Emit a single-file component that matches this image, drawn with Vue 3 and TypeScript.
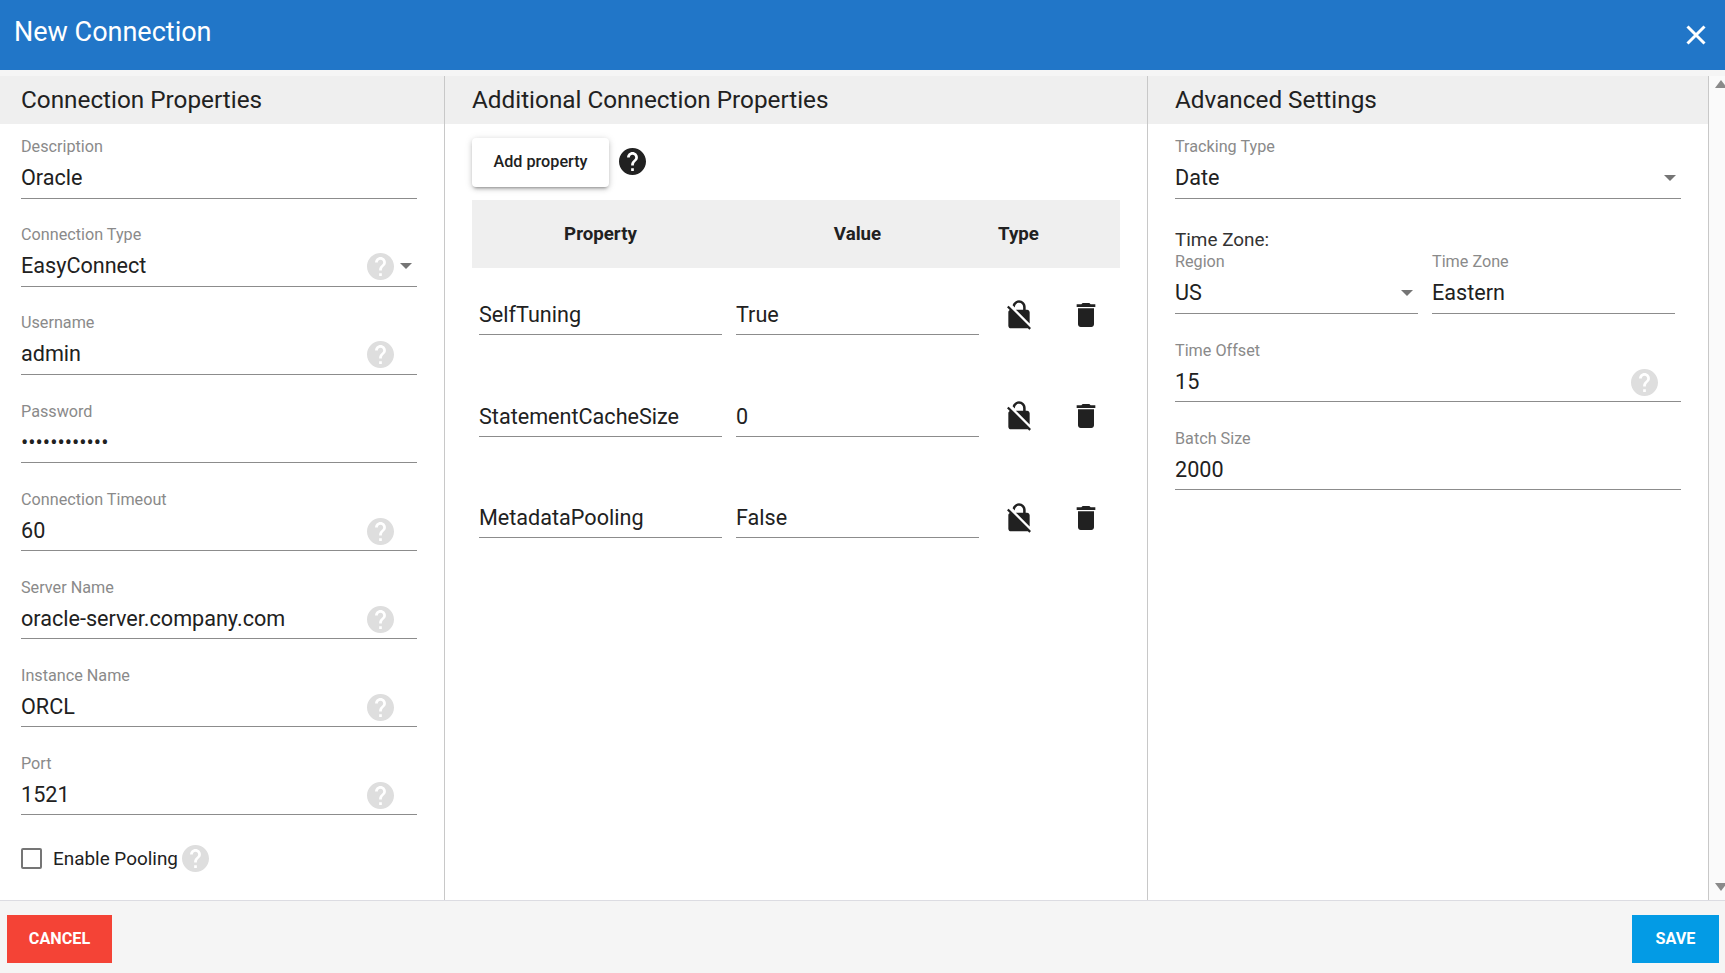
<script setup lang="ts">
interface Field { label: string; value: string; help?: boolean; select?: boolean; low?: boolean }
const leftFields: Field[] = [
  { label: 'Description', value: 'Oracle' },
  { label: 'Connection Type', value: 'EasyConnect', help: true, select: true },
  { label: 'Username', value: 'admin', help: true },
  { label: 'Password', value: '••••••••••••', low: true },
  { label: 'Connection Timeout', value: '60', help: true, low: true },
  { label: 'Server Name', value: 'oracle-server.company.com', help: true, low: true },
  { label: 'Instance Name', value: 'ORCL', help: true, low: true },
  { label: 'Port', value: '1521', help: true, low: true },
]
const rows = [
  { name: 'SelfTuning', value: 'True' },
  { name: 'StatementCacheSize', value: '0' },
  { name: 'MetadataPooling', value: 'False' },
]
const helpPath = 'M12 2C6.48 2 2 6.48 2 12s4.48 10 10 10 10-4.48 10-10S17.52 2 12 2zm1 17h-2v-2h2v2zm2.07-7.75l-.9.92C13.45 12.9 13 13.5 13 15h-2v-.5c0-1.1.45-2.1 1.17-2.83l1.24-1.26c.37-.36.59-.86.59-1.41 0-1.1-.9-2-2-2s-2 .9-2 2H8c0-2.21 1.79-4 4-4s4 1.79 4 4c0 .88-.36 1.68-.93 2.25z'
</script>

<template>
  <div class="dialog">
    <header class="topbar">
      <h1 class="title">New Connection</h1>
      <svg class="close" viewBox="0 0 20 20"><path d="M1.5 1.5L18.5 18.5M18.5 1.5L1.5 18.5" /></svg>
    </header>

    <main class="body">
      <section class="col col-left">
        <h2 class="col-title">Connection Properties</h2>
        <div v-for="f in leftFields" :key="f.label" class="field" :class="{ low: f.low }">
          <div class="label">{{ f.label }}</div>
          <div class="input" :class="{ 'has-help': f.help && !f.select, 'has-select': f.select }">
            <span class="val">{{ f.value }}</span>
            <svg v-if="f.help" class="help" viewBox="2 2 20 20"><path :d="helpPath" /></svg>
            <span v-if="f.select" class="caret caret-near"></span>
          </div>
        </div>
        <div class="pooling">
          <span class="checkbox"></span>
          <span class="pool-text">Enable Pooling</span>
          <svg class="help" viewBox="2 2 20 20"><path :d="helpPath" /></svg>
        </div>
      </section>

      <section class="col col-mid">
        <h2 class="col-title">Additional Connection Properties</h2>
        <div class="actions">
          <button class="add">Add property</button>
          <svg class="help help-dark" viewBox="2 2 20 20"><path :d="helpPath" /></svg>
        </div>
        <div class="grid thead">
          <div>Property</div>
          <div>Value</div>
          <div class="th-type">Type</div>
        </div>
        <div v-for="r in rows" :key="r.name" class="grid trow">
          <div class="input cell"><span class="val">{{ r.name }}</span></div>
          <div class="input cell"><span class="val">{{ r.value }}</span></div>
          <svg class="icon" viewBox="0 0 24 24"><path d="M21 21.78L4.22 5 3 6.22l2.04 2.04C4.42 8.6 4 9.25 4 10v10c0 1.1.9 2 2 2h12c.23 0 .45-.05.66-.12L19.78 23 21 21.78zM8.9 6c0-1.71 1.39-3.1 3.1-3.1s3.1 1.39 3.1 3.1v2H9.66L20 18.34V10c0-1.1-.9-2-2-2h-1V6c0-2.76-2.24-5-5-5-2.32 0-4.26 1.59-4.82 3.74L8.9 6.46V6z" /></svg>
          <svg class="icon" viewBox="0 0 24 24"><path d="M6 19c0 1.1.9 2 2 2h8c1.1 0 2-.9 2-2V7H6v12zM19 4h-3.5l-1-1h-5l-1 1H5v2h14V4z" /></svg>
        </div>
      </section>

      <section class="col col-right">
        <h2 class="col-title">Advanced Settings</h2>
        <div class="field">
          <div class="label">Tracking Type</div>
          <div class="input has-select-far">
            <span class="val">Date</span>
            <span class="caret"></span>
          </div>
        </div>
        <div class="tz-title">Time Zone:</div>
        <div class="tz-row">
          <div class="field sub">
            <div class="label">Region</div>
            <div class="input has-select-far">
              <span class="val">US</span>
              <span class="caret"></span>
            </div>
          </div>
          <div class="field sub">
            <div class="label">Time Zone</div>
            <div class="input"><span class="val">Eastern</span></div>
          </div>
        </div>
        <div class="field short">
          <div class="label">Time Offset</div>
          <div class="input has-help">
            <span class="val">15</span>
            <svg class="help" viewBox="2 2 20 20"><path :d="helpPath" /></svg>
          </div>
        </div>
        <div class="field short">
          <div class="label">Batch Size</div>
          <div class="input"><span class="val">2000</span></div>
        </div>
      </section>

      <aside class="scrollbar">
        <span class="arrow up"></span>
        <span class="arrow down"></span>
      </aside>
    </main>

    <footer class="footer">
      <button class="btn cancel">CANCEL</button>
      <button class="btn save">SAVE</button>
    </footer>
  </div>
</template>

<style>
html, body { margin: 0; background: #f5f5f5; }
</style>

<style scoped>
.dialog {
  width: 1725px;
  height: 973px;
  display: flex;
  flex-direction: column;
  overflow: hidden;
  background: #f5f5f5;
  font-family: Roboto, "Liberation Sans", sans-serif;
  color: #212121;
}
.topbar {
  height: 70px;
  flex: none;
  background: #2176c8;
  color: #fff;
  display: flex;
  align-items: center;
  justify-content: space-between;
  padding: 0 19px 0 14px;
  box-sizing: border-box;
}
.title { margin: 0 0 6px; font-size: 27px; font-weight: 400; line-height: 36px; }
.close { width: 20px; height: 20px; fill: none; stroke: #fff; stroke-width: 3; }

.body {
  margin-top: 6px;
  height: 824px;
  flex: none;
  display: flex;
  background: #fff;
}
.col { box-sizing: border-box; height: 100%; border-right: 1px solid #c8c8c8; }
.col-left { width: 445px; padding-right: 27px; padding-left: 21px; }
.col-mid { width: 703px; padding: 0 27px; }
.col-right { width: 561px; padding: 0 27px; }
.col-title {
  margin: 0 -27px 0 -27px;
  padding: 0 27px;
  height: 48px;
  line-height: 48px;
  background: #efefef;
  font-size: 24.3px;
  font-weight: 400;
  white-space: nowrap;
}
.col-left .col-title { margin-left: -21px; padding-left: 21px; }

.field { height: 88px; box-sizing: border-box; padding-top: 13px; }
.label { height: 20px; line-height: 20px; font-size: 16.2px; color: #8a8a8a; white-space: nowrap; }
.input {
  height: 42px;
  box-sizing: border-box;
  display: flex;
  align-items: center;
  padding-top: 1px;
  border-bottom: 1px solid #8c8c8c;
}
.val { flex: 1; font-size: 21.6px; line-height: 40px; white-space: nowrap; }
.low .label { margin-top: 1px; }
.low .input { height: 41px; padding-top: 2px; }
.short .input { height: 41px; padding-top: 2px; }
.has-help { padding-right: 23px; }
.has-select { padding-right: 5px; }
.has-select-far { padding-right: 5px; }
.help { width: 27px; height: 27px; fill: #dedede; flex: none; }
.caret {
  flex: none;
  width: 0;
  height: 0;
  border-left: 6px solid transparent;
  border-right: 6px solid transparent;
  border-top: 6px solid #757575;
}
.caret-near { margin-left: 6px; }

.pooling { display: flex; align-items: center; margin-top: 17px; height: 27px; }
.checkbox {
  width: 21px;
  height: 21px;
  box-sizing: border-box;
  border: 2px solid #757575;
  border-radius: 2px;
  margin-right: 11px;
}
.pool-text { font-size: 18.9px; margin-right: 4px; }

.actions { height: 76px; display: flex; align-items: center; gap: 10px; box-sizing: border-box; }
.add {
  width: 137px;
  height: 49px;
  border: 0;
  border-radius: 4px;
  background: #fff;
  padding: 0 0 2px;
  font: 500 16.2px Roboto, sans-serif;
  color: #212121;
  box-shadow: 0 3px 3px -2px rgba(0,0,0,.3), 0 2px 5px 0 rgba(0,0,0,.16), 0 1px 8px 0 rgba(0,0,0,.1);
}
.help-dark { fill: #212121; margin-bottom: 2px; }
.grid {
  display: grid;
  grid-template-columns: 243px 243px 49px 58px;
  column-gap: 14px;
  padding: 0 0 0 7px;
}
.thead {
  height: 68px;
  align-items: center;
  background: #efefef;
  text-align: center;
  font-weight: 700;
  font-size: 18.7px;
  box-sizing: border-box;
}
.th-type { padding-left: 2px; }
.trow { height: 101.5px; align-items: center; }
.cell { height: 43px; margin-top: 24px; align-self: start; padding-top: 4px; }
.icon { width: 32px; height: 32px; fill: #212121; justify-self: center; margin: 0 0 8px 2px; }

.tz-title { margin-top: 18px; height: 20px; line-height: 20px; font-size: 18.9px; color: #333; }
.tz-row { display: grid; grid-template-columns: 243px 243px; column-gap: 14px; }
.sub { height: 78px; padding-top: 2px; }

.scrollbar {
  flex: 1;
  display: flex;
  flex-direction: column;
  justify-content: space-between;
  align-items: flex-start;
  padding: 4px 0 9px 6px;
  background: #fafafa;
  overflow: hidden;
}
.arrow {
  flex: none;
  width: 0;
  height: 0;
  border-left: 6px solid transparent;
  border-right: 6px solid transparent;
}
.up { border-bottom: 8px solid #8a8a8a; }
.down { border-top: 8px solid #8a8a8a; }

.footer {
  flex: 1;
  display: flex;
  justify-content: space-between;
  padding: 14px 6px 0 7px;
  border-top: 1px solid #dcdce2;
  box-sizing: border-box;
}
.btn {
  height: 48px;
  border: 0;
  color: #fff;
  padding: 0 0 1px;
  font: 700 16.2px Roboto, sans-serif;
  letter-spacing: 0;
}
.cancel { width: 105px; background: #f44336; }
.save { width: 87px; background: #039be5; }
</style>
